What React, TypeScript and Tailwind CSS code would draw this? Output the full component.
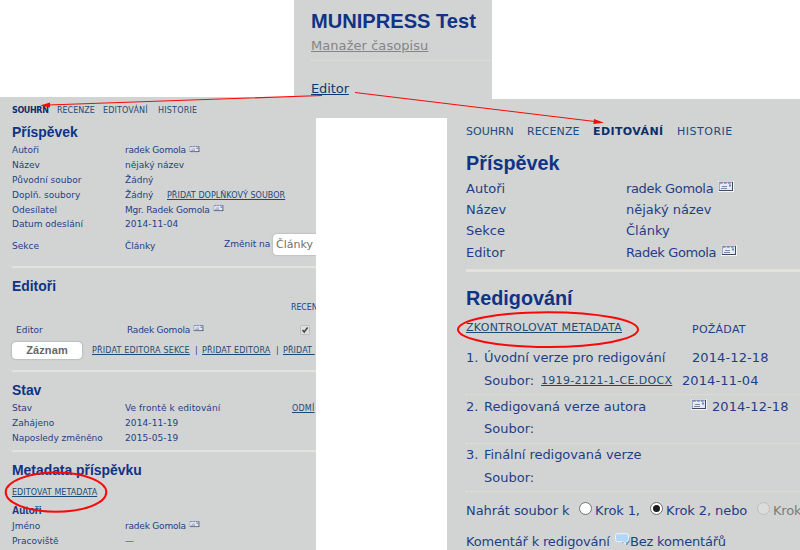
import type { ReactNode } from "react";

const small = "text-[9px] leading-none";
const link = "underline decoration-1 underline-offset-1 text-[#1c4a74]";

function Row({ className = "", children }: { className?: string; children: ReactNode }) {
  return <div className={"flex shrink-0 items-center whitespace-nowrap " + className}>{children}</div>;
}

function Mail({ className = "" }: { className?: string }) {
  return (
    <svg viewBox="0 0 16 11" className={"shrink-0 " + className}>
      <rect width="16" height="11" fill="#f4f6f8" />
      <rect x="1.2" y="1.2" width="13.3" height="8.3" fill="#e6ebf2" stroke="#7f8ea8" strokeWidth="1" />
      <path d="M2 2h12" stroke="#4a67b5" strokeWidth="1.2" strokeDasharray="2 2" />
      <path d="M4 2h9" stroke="#e0606e" strokeWidth="1.2" strokeDasharray="1 3" />
      <path d="M14.5 1v9M1 9.5h14" stroke="#3f4864" strokeWidth="1" />
      <path d="M4 5.5h5M3 7.5h6" stroke="#7c89a8" strokeWidth="1" />
      <rect x="11" y="3.5" width="2" height="2" fill="#6f86c4" />
    </svg>
  );
}

function Radio({ checked = false, disabled = false }: { checked?: boolean; disabled?: boolean }) {
  return (
    <span
      className={
        "-mt-1 flex size-[13px] shrink-0 items-center justify-center rounded-full border " +
        (disabled ? "border-[#bdbdbd] bg-[#dcdcdc]" : "border-[#707070] bg-white")
      }
    >
      {checked && <span className="size-[7px] rounded-full bg-[#1c1c1c]" />}
    </span>
  );
}

function Bubble() {
  return (
    <svg viewBox="0 0 15 13" className="-mt-1 h-[13px] w-[15px] shrink-0">
      <path d="M7 3h6q1.5 0 1.5 2v3q0 2-1.5 2l-1 2.5L10 10H7z" fill="#648ba8" />
      <path d="M2.5.7h9q2 0 2 2v4q0 2-2 2H11l-.3 2.3L8 8.7H2.5q-2 0-2-2v-4q0-2 2-2z" fill="#b0d7f7" stroke="#eaf4fc" />
    </svg>
  );
}

function Heading({ className = "", children }: { className?: string; children: ReactNode }) {
  return (
    <h2
      className={
        "flex shrink-0 items-center whitespace-nowrap font-['Liberation_Sans',Arial,sans-serif] font-bold leading-none text-[#0f3386] " +
        className
      }
    >
      {children}
    </h2>
  );
}

function SummaryPanel() {
  return (
    <section className={"mt-[97px] flex h-[453px] flex-col overflow-hidden bg-[#d2d4d3] pl-3 pt-[7px] " + small}>
      <Row className="h-[14px] text-[8px] text-[#1c4a7c]">
        <b className="w-[45px] tracking-[-0.35px] text-[#0b2f69]">SOUHRN</b>
        <span className="w-[46px]">RECENZE</span>
        <span className="w-[55px] tracking-[0.15px]">EDITOVÁNÍ</span>
        <span className="tracking-[0.2px]">HISTORIE</span>
      </Row>
      <Heading className="mt-[5px] h-5 text-[13.9px]">Příspěvek</Heading>
      <Row className="h-[15px]"><span className="w-[113px]">Autoři</span><span className="w-[64px] tracking-[-0.2px]">radek Gomola</span><Mail className="-mt-1 h-2 w-[11px]" /></Row>
      <Row className="h-[15px]"><span className="w-[113px]">Název</span>nějaký název</Row>
      <Row className="h-[15px]"><span className="w-[113px]">Původní soubor</span>Žádný</Row>
      <Row className="h-[15px]"><span className="w-[113px]">Doplň. soubory</span><span className="w-[42px]">Žádný</span><span className={"text-[8px] tracking-[0.05px] " + link}>PŘIDAT DOPLŇKOVÝ SOUBOR</span></Row>
      <Row className="h-[14px]"><span className="w-[113px]">Odesílatel</span><span className="w-[88px] tracking-[-0.18px]">Mgr. Radek Gomola</span><Mail className="-mt-1 h-2 w-[11px]" /></Row>
      <Row className="h-[15px]"><span className="w-[113px]">Datum odeslání</span><span className="tracking-[0.1px]">2014-11-04</span></Row>
      <Row className="mt-[1px] h-[26px]">
        <span className="w-[113px]">Sekce</span>
        <span className="w-[99px]">Články</span>
        <span className="-mt-1 w-[49px]">Změnit na</span>
        <span className="-mt-1 flex h-[21px] w-[60px] shrink-0 items-center rounded-sm bg-white pl-[3px] text-[11px] text-[#717171] shadow-[0_0_2px_#999]">Články</span>
      </Row>
      <div className="mt-[7px] h-[2px] shrink-0 bg-[#e4e2dc]" />
      <Heading className="mt-[9px] h-5 text-[13.9px]">Editoři</Heading>
      <Row className="mt-[5px] h-3 pl-[279px] text-[8px] tracking-[-0.15px]">RECEN</Row>
      <Row className="mt-2 h-4 pl-1">
        <span className="w-[111px]">Editor</span>
        <span className="w-[66px] tracking-[-0.22px]">Radek Gomola</span>
        <Mail className="-mt-1 h-2 w-[11px]" />
        <svg viewBox="0 0 10 10" className="ml-[96px] size-[10px] shrink-0">
          <rect x=".5" y=".5" width="9" height="9" rx="1" fill="#dedede" stroke="#bbb" />
          <path d="M2.5 5l1.7 2L7.6 2.5" fill="none" stroke="#444" strokeWidth="1.5" />
        </svg>
      </Row>
      <Row className="mt-1 h-[17px] text-[8px]">
        <span className="-mt-[1px] flex h-[17px] w-[70px] shrink-0 items-center justify-center rounded-sm bg-white font-['Liberation_Sans',Arial,sans-serif] text-[11px] font-bold tracking-[0.1px] text-[#666] shadow-[0_0_2px_#888]">Záznam</span>
        <span className="ml-[10px] w-[103px]"><span className={"tracking-[0.16px] " + link}>PŘIDAT EDITORA SEKCE</span></span>
        <span className="w-[7px]">|</span>
        <span className="w-[74px]"><span className={"tracking-[0.14px] " + link}>PŘIDAT EDITORA</span></span>
        <span className="w-[7px]">|</span>
        <span className={"tracking-[0.1px] " + link}>PŘIDAT&nbsp;</span>
      </Row>
      <div className="mt-[11px] h-[2px] shrink-0 bg-[#e4e2dc]" />
      <Heading className="mt-[9px] h-5 text-[13.9px]">Stav</Heading>
      <Row className="h-[15px]"><span className="w-[113px]">Stav</span><span className="w-[167px] tracking-[0.08px]">Ve frontě k editování</span><span className={"text-[8px] tracking-[0.2px] " + link}>ODMÍ</span></Row>
      <Row className="h-[15px]"><span className="w-[113px]">Zahájeno</span><span className="tracking-[0.1px]">2014-11-19</span></Row>
      <Row className="h-[14px]"><span className="w-[113px] tracking-[-0.05px]">Naposledy změněno</span><span className="tracking-[0.1px]">2015-05-19</span></Row>
      <div className="mt-[5px] h-[2px] shrink-0 bg-[#e4e2dc]" />
      <Heading className="mt-[9px] h-5 text-[13.9px]">Metadata příspěvku</Heading>
      <Row className="mt-[5px] h-[13px] text-[8px]"><span className={"tracking-[0.06px] " + link}>EDITOVAT METADATA</span></Row>
      <Heading className="mt-[5px] h-[14px] text-[10px]">Autoři</Heading>
      <Row className="h-4"><span className="w-[113px]">Jméno</span><span className="w-[64px] tracking-[-0.2px]">radek Gomola</span><Mail className="-mt-1 h-2 w-[11px]" /></Row>
      <Row className="h-[15px]"><span className="w-[113px]">Pracoviště</span>—</Row>
    </section>
  );
}

function EditingPanel() {
  return (
    <section className="mt-[99px] flex h-[451px] flex-col overflow-hidden bg-[#d2d4d3] pl-[19px] pt-[24px] text-[13px] leading-none">
      <Row className="h-4 text-[11px] text-[#1c4a7c]">
        <span className="w-[61px]">SOUHRN</span>
        <span className="w-[66px] tracking-[0.1px]">RECENZE</span>
        <b className="w-[84px] tracking-[0.4px] text-[#0b2f69]">EDITOVÁNÍ</b>
        <span className="tracking-[0.5px]">HISTORIE</span>
      </Row>
      <Heading className="mt-[13px] h-6 text-[19.8px]">Příspěvek</Heading>
      <Row className="mt-[1px] h-[22px]"><span className="w-[160px]">Autoři</span><span className="w-[92px] tracking-[-0.35px]">radek Gomola</span><Mail className="-mt-1 h-[11px] w-4" /></Row>
      <Row className="h-[21px]"><span className="w-[160px]">Název</span>nějaký název</Row>
      <Row className="h-[21px]"><span className="w-[160px]">Sekce</span>Články</Row>
      <Row className="h-[22px]"><span className="w-[160px]">Editor</span><span className="w-[95px] tracking-[-0.4px]">Radek Gomola</span><Mail className="-mt-1 h-[11px] w-4" /></Row>
      <div className="mt-[6px] h-[3px] shrink-0 bg-[#e4e2dc]" />
      <Heading className="mt-[15px] h-6 text-[19.8px]">Redigování</Heading>
      <Row className="mt-[8px] h-4 text-[11px]"><span className="w-[226px]"><span className={"tracking-[0.28px] " + link}>ZKONTROLOVAT METADATA</span></span><span className="mt-1 tracking-[0.25px]">POŽÁDAT</span></Row>
      <Row className="mt-[11px] h-[23px]"><span className="w-[18px]">1.</span><span className="w-[208px] tracking-[-0.08px]">Úvodní verze pro redigování</span><span className="tracking-[0.1px]">2014-12-18</span></Row>
      <Row className="h-[23px] pl-[18px]"><span className="w-[57px]">Soubor:</span><span className="w-[141px] text-[11px]"><span className={"tracking-[0.31px] " + link}>1919-2121-1-CE.DOCX</span></span><span className="tracking-[0.1px]">2014-11-04</span></Row>
      <div className="mt-[2px] shrink-0 border-t border-dotted border-[#e4e2d4]" />
      <Row className="h-[22px]"><span className="w-[18px]">2.</span><span className="w-[207px] tracking-[-0.04px]">Redigovaná verze autora</span><Mail className="-mt-1 mr-[5px] h-[11px] w-4" /><span className="tracking-[0.1px]">2014-12-18</span></Row>
      <Row className="h-[23px] pl-[18px]">Soubor:</Row>
      <div className="mt-[3px] shrink-0 border-t border-dotted border-[#e4e2d4]" />
      <Row className="h-[21px]"><span className="w-[18px]">3.</span><span className="tracking-[-0.06px]">Finální redigovaná verze</span></Row>
      <Row className="h-[25px] pl-[18px]">Soubor:</Row>
      <div className="mt-[1px] shrink-0 border-t border-dotted border-[#e4e2d4]" />
      <Row className="mt-[7px] h-[22px]">
        <span className="w-[113px] tracking-[-0.08px]">Nahrát soubor k</span>
        <Radio /><span className="ml-[3px] w-[55px] tracking-[-0.1px]">Krok 1,</span>
        <Radio checked /><span className="ml-[3px] w-[91px] tracking-[-0.08px]">Krok 2, nebo</span>
        <Radio disabled /><span className="ml-[3px] tracking-[-0.2px] text-[#7b7b7b]">Krok</span>
      </Row>
      <Row className="mt-[9px] h-[22px]"><span className="w-[149px] tracking-[-0.18px]">Komentář k redigování</span><Bubble /><span className="tracking-[-0.2px]">Bez komentářů</span></Row>
    </section>
  );
}

export default function App() {
  return (
    <main className="relative grid h-[550px] w-[800px] grid-cols-[316px_131px_353px] overflow-hidden bg-white font-['DejaVu_Sans',Verdana,sans-serif] text-[#1e3e87] [&_b]:shrink-0 [&_span]:shrink-0">
      <SummaryPanel />
      <div />
      <EditingPanel />
      <section className="absolute left-[294px] top-0 flex h-[118px] w-[198px] flex-col bg-[#d2d4d3] pl-[17px] text-[13px] leading-none">
        <Heading className="mt-[9px] h-6 text-[20.1px]">MUNIPRESS Test</Heading>
        <Row className="mt-[3px] h-[18px] text-[#858585]"><span className="tracking-[0.06px] underline underline-offset-1">Manažer časopisu</span></Row>
        <div className="mt-[6px] border-t border-dotted border-[#e4e2d4]" />
        <Row className="mt-[18px] h-[18px]"><span className="tracking-[-0.1px] text-[#0b3a73] underline underline-offset-1">Editor</span></Row>
      </section>
      <svg viewBox="0 0 800 550" className="pointer-events-none absolute left-0 top-0 h-[550px] w-[800px]" fill="none" stroke="#f80909">
        <path d="M322 95.5L48 105M355 92.5L595 121.5" strokeWidth="1.1" />
        <path d="M40 105.5l10-3v5zM604 122.8l-10-3.8-.6 5z" fill="#f80909" stroke="none" />
        <ellipse cx="56" cy="492.2" rx="50.3" ry="19.6" strokeWidth="2" />
        <ellipse cx="548" cy="329.6" rx="90" ry="17.4" strokeWidth="2" />
      </svg>
    </main>
  );
}
